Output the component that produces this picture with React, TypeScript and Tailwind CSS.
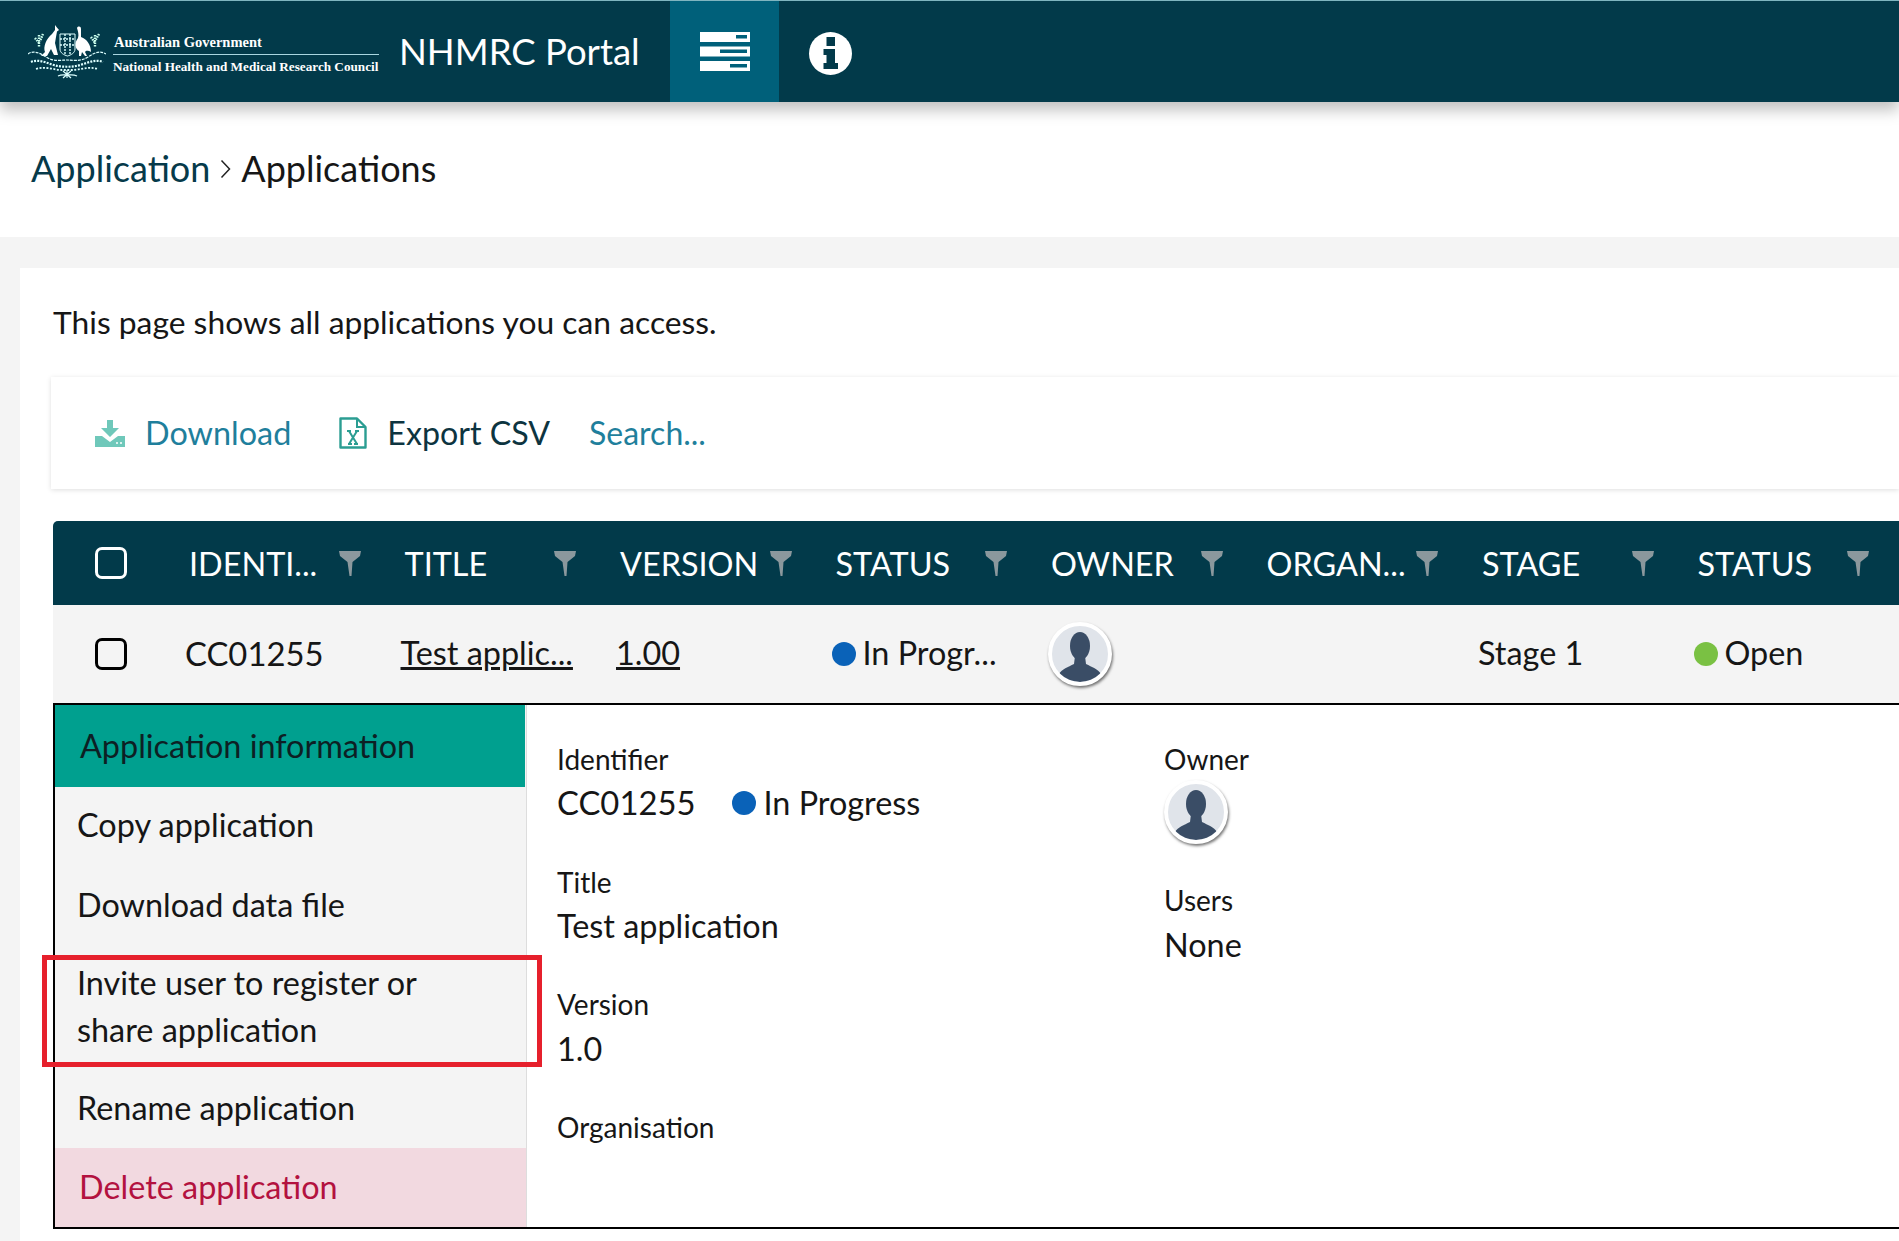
import React from "react";

const Funnel = () => (
  <svg width="22" height="25" viewBox="0 0 22 25" className="shrink-0">
    <path d="M0 0H22L21 5L13.5 11L12.5 25H10.5L8.5 11L1 5Z" fill="#8b989d" />
  </svg>
);

const Avatar = () => (
  <div className="w-[64px] h-[64px] rounded-full bg-[#e0e4ea] border-[4px] border-white shadow-[1px_2px_3px_rgba(0,0,0,0.55)] overflow-hidden shrink-0">
    <svg width="56" height="56" viewBox="0 0 56 56">
      <ellipse cx="28" cy="20" rx="10" ry="14" fill="#3a4d66" />
      <path d="M23 30H33L34 38C40 41 46 43 49 48C45 53 37 56 28 56C19 56 11 53 7 48C10 43 16 41 22 38Z" fill="#3a4d66" />
    </svg>
  </div>
);

const Crest = () => (
  <svg width="78" height="54" viewBox="0 0 78 54" fill="none" className="shrink-0">
    <path d="M27 0L28.5 2L31 5L29 6.5L28 12L27 18L30 30H26L23 24L19 31H13L17 27C15 22 18 14 24 9L27 5Z" fill="#fff" />
    <path d="M49 3C50 1 53 1 53 4L53 12C59 14 63 20 63 27C59 25 58 26 57 27L59 31H57L54 27L53 31H51V26C47 24 46 18 50 13C51 10 50 6 49 3Z" fill="#fff" />
    <path d="M32 9H47V24C47 28 43 30 39.5 31C36 30 32 28 32 24Z" stroke="#dff" strokeWidth="1" />
    <path d="M32 14H47M32 20H47M37 9V30M42 9V30" stroke="#dff" strokeWidth="1.4" strokeDasharray="2 1" />
    <path d="M11 10V22M15 9L12 16M7 13L11 18M67 10V22M63 12L67 18M71 9L67 16" stroke="#cfe" strokeWidth="2.4" strokeDasharray="1.5 1" />
    <path d="M0 29C5 25 12 28 18 32C26 37 33 35 39 35C45 35 52 37 60 32C66 28 72 25 78 29" stroke="#dff" strokeWidth="1.2" strokeDasharray="3 1" />
    <path d="M3 37C12 33 22 40 30 41C36 42 42 42 48 41C56 40 66 33 75 37" stroke="#dff" strokeWidth="2.2" strokeDasharray="2 1.2" />
    <path d="M8 44C18 41 26 45 34 45H44C52 45 60 41 70 44" stroke="#dff" strokeWidth="1.8" strokeDasharray="2 1.5" />
    <path d="M30 51C34 49 36 50 39 50C42 50 45 49 49 51M35 46L43 53M43 46L35 53M39 45V53" stroke="#dff" strokeWidth="1.2" />
  </svg>
);

const StackIcon = () => (
  <svg width="50" height="40" viewBox="0 0 50 40">
    <rect x="0" y="0" width="50" height="10" fill="#fff" />
    <rect x="36" y="3" width="11" height="3.5" fill="#00607a" />
    <rect x="0" y="14.5" width="50" height="10" fill="#fff" />
    <rect x="20" y="17.5" width="27" height="3.5" fill="#00607a" />
    <rect x="0" y="29" width="50" height="10" fill="#fff" />
    <rect x="30" y="32" width="17" height="3.5" fill="#00607a" />
  </svg>
);

const InfoIcon = () => (
  <svg width="43" height="43" viewBox="0 0 43 43">
    <circle cx="21.5" cy="21.5" r="21.5" fill="#fff" />
    <rect x="17.5" y="5" width="8.5" height="9" fill="#023a4a" />
    <path d="M14.5 17H26V31H29V37H14.5V31H17.5V23H14.5Z" fill="#023a4a" />
  </svg>
);

const Chevron = () => (
  <svg width="11" height="20" viewBox="0 0 11 20" fill="none" className="mx-[10px] mt-[3px] shrink-0">
    <path d="M1.5 1.5L9.5 10L1.5 18.5" stroke="#222" strokeWidth="1.5" />
  </svg>
);

const DownloadIcon = () => (
  <svg width="30" height="27" viewBox="0 0 30 27" className="shrink-0">
    <path d="M12 0H18V8H24L15 17L6 8H12Z" fill="#6fc8ba" />
    <path d="M0 16H7L15 22L23 16H30V27H0Z" fill="#6fc8ba" />
    <circle cx="22" cy="23" r="1" fill="#fff" />
    <circle cx="26" cy="23" r="1" fill="#fff" />
  </svg>
);

const ExcelIcon = () => (
  <svg width="28" height="32" viewBox="0 0 28 32" fill="none" className="shrink-0">
    <path d="M1.5 1.5H18L26.5 10V30.5H1.5Z" stroke="#2b9d92" strokeWidth="2.4" strokeLinejoin="round" />
    <path d="M18 1.5V10H26.5" stroke="#2b9d92" strokeWidth="2" />
    <path d="M8 14H12M16 14H20M9 27H13M15 27H19M10 14L18 27M18 14L10 27" stroke="#2b9d92" strokeWidth="2" />
  </svg>
);

const columns = ["IDENTI...", "TITLE", "VERSION", "STATUS", "OWNER", "ORGAN...", "STAGE", "STATUS"];

const HeaderCell = ({ label }: { label: string }) => (
  <div className="w-[215.5px] shrink-0 pl-2 pr-[36px] flex items-center justify-between">
    <span className="whitespace-nowrap pt-[2px]">{label}</span>
    <Funnel />
  </div>
);

const Cell = ({ children }: { children?: React.ReactNode }) => (
  <div className="w-[215.5px] shrink-0 pl-1 pb-[1px] flex items-center whitespace-nowrap">{children}</div>
);

const Dot = ({ color }: { color: string }) => (
  <span className={`inline-block w-6 h-6 rounded-full mr-[7px] shrink-0 ${color}`} />
);

const Field = ({ label, children, className }: { label: string; children?: React.ReactNode; className: string }) => (
  <div className={className}>
    <div className="text-[28px] leading-[36px]">{label}</div>
    {children}
  </div>
);

export default function App() {
  return (
    <div className="w-[1899px] h-[1241px] overflow-hidden bg-[#f4f4f4] font-[Lato,sans-serif] text-[#161616] text-[32.4px] relative">
      <header className="relative z-10 h-[102px] bg-[#023a4a] border-t border-t-[#7fb5c0] flex shadow-[0_8px_14px_rgba(0,0,0,0.25)]">
        <div className="w-[670px] shrink-0 flex items-center pl-[28px]">
          <Crest />
          <div className="ml-[7px] w-[266px] shrink-0 text-white font-['Liberation_Serif',serif] font-bold text-[14.5px] leading-[24px] pt-[6px]">
            <div className="whitespace-nowrap border-b border-b-[#a9d6e0] pl-px">Australian Government</div>
            <div className="whitespace-nowrap text-[13.2px]">National Health and Medical Research Council</div>
          </div>
          <div className="ml-[20px] text-white text-[36.5px] whitespace-nowrap">NHMRC Portal</div>
        </div>
        <div className="w-[109px] shrink-0 bg-[#00607a] flex items-center justify-center"><StackIcon /></div>
        <div className="pl-[30px] pt-[4px] flex items-center"><InfoIcon /></div>
      </header>

      <div className="bg-white h-[135px] flex items-center pl-[31px] text-[36px] pb-[4px]">
        <span className="text-[#063a4a]">Application</span>
        <Chevron />
        <span>Applications</span>
      </div>

      <main className="ml-[20px] mt-[31px] bg-white h-[973px] pl-[33px] overflow-hidden">
        <p className="pt-[36px] leading-[36px] text-[31.8px]">This page shows all applications you can access.</p>
        <div className="mt-[37px] h-[112px] bg-white shadow-[0_1px_5px_rgba(0,0,0,0.13)] flex items-center pl-[44px] ml-[-2px]">
          <DownloadIcon />
          <span className="ml-[20px] text-[#1f7f9c]">Download</span>
          <span className="ml-[48px]"><ExcelIcon /></span>
          <span className="ml-[20px] text-[#0d3440] text-[32.2px]">Export CSV</span>
          <span className="ml-[39px] text-[#1f7f9c] text-[32px]">Search...</span>
        </div>

        <div className="mt-[32px] h-[84px] bg-[#023a4a] rounded-tl-[5px] flex text-white">
          <div className="w-[128px] shrink-0 pl-[42px] flex items-center">
            <span className="block w-[32px] h-[32px] rounded-[7px] border-[3px] border-white" />
          </div>
          {columns.map((c, i) => <HeaderCell key={i} label={c} />)}
        </div>

        <div className="h-[98px] bg-[#f4f4f4] flex">
          <div className="w-[128px] shrink-0 pl-[42px] flex items-center">
            <span className="block w-[32px] h-[32px] rounded-[7px] border-[3px] border-black" />
          </div>
          <Cell><span className="text-[32.8px]">CC01255</span></Cell>
          <Cell><span className="underline">Test applic...</span></Cell>
          <Cell><span className="underline">1.00</span></Cell>
          <Cell><Dot color="bg-[#0a62b8]" />In Progr...</Cell>
          <Cell><span className="ml-[1px]"><Avatar /></span></Cell>
          <Cell />
          <Cell>Stage 1</Cell>
          <Cell><Dot color="bg-[#7ac143]" />Open</Cell>
        </div>

        <div className="relative h-[526px] border-y-2 border-l-2 border-black flex">
          <nav className="w-[472px] shrink-0 bg-[#f4f4f4] border-r border-r-[#dddddd] flex flex-col">
            <div className="h-[82px] bg-[#00a08f] flex items-center pl-[25px] w-[470px] text-[#0d1f24]">Application information</div>
            <div className="h-[76px] flex items-center pl-[22px]">Copy application</div>
            <div className="h-[80px] flex items-center pl-[22px] pt-[4px]">Download data file</div>
            <div className="h-[126px] flex items-center pl-[22px] leading-[47px]">Invite user to register or<br />share application</div>
            <div className="h-[79px] flex items-center pl-[22px]">Rename application</div>
            <div className="h-[79px] bg-[#f2d9e0] text-[#b3123f] flex items-center pl-[24px]">Delete application</div>
          </nav>
          <section className="pl-[30px] flex">
            <div className="w-[607px] shrink-0">
              <Field label="Identifier" className="pt-[36px]">
                <div className="flex items-center mt-[7px] leading-[38px]">
                  <span className="mr-[37px] text-[32.8px]">CC01255</span><Dot color="bg-[#0a62b8]" />In Progress
                </div>
              </Field>
              <Field label="Title" className="mt-[42px]"><div className="mt-[7px] leading-[38px]">Test application</div></Field>
              <Field label="Version" className="mt-[41px]"><div className="mt-[8px] leading-[38px]">1.0</div></Field>
              <Field label="Organisation" className="mt-[41px]" />
            </div>
            <div>
              <Field label="Owner" className="pt-[36px]"><div className="mt-[3px]"><Avatar /></div></Field>
              <Field label="Users" className="mt-[38px]"><div className="mt-[8px] leading-[38px]">None</div></Field>
            </div>
          </section>
          <div className="absolute left-[-13px] top-[250px] w-[500px] h-[112px] border-[5px] border-[#e6202c]" />
        </div>
      </main>
    </div>
  );
}
